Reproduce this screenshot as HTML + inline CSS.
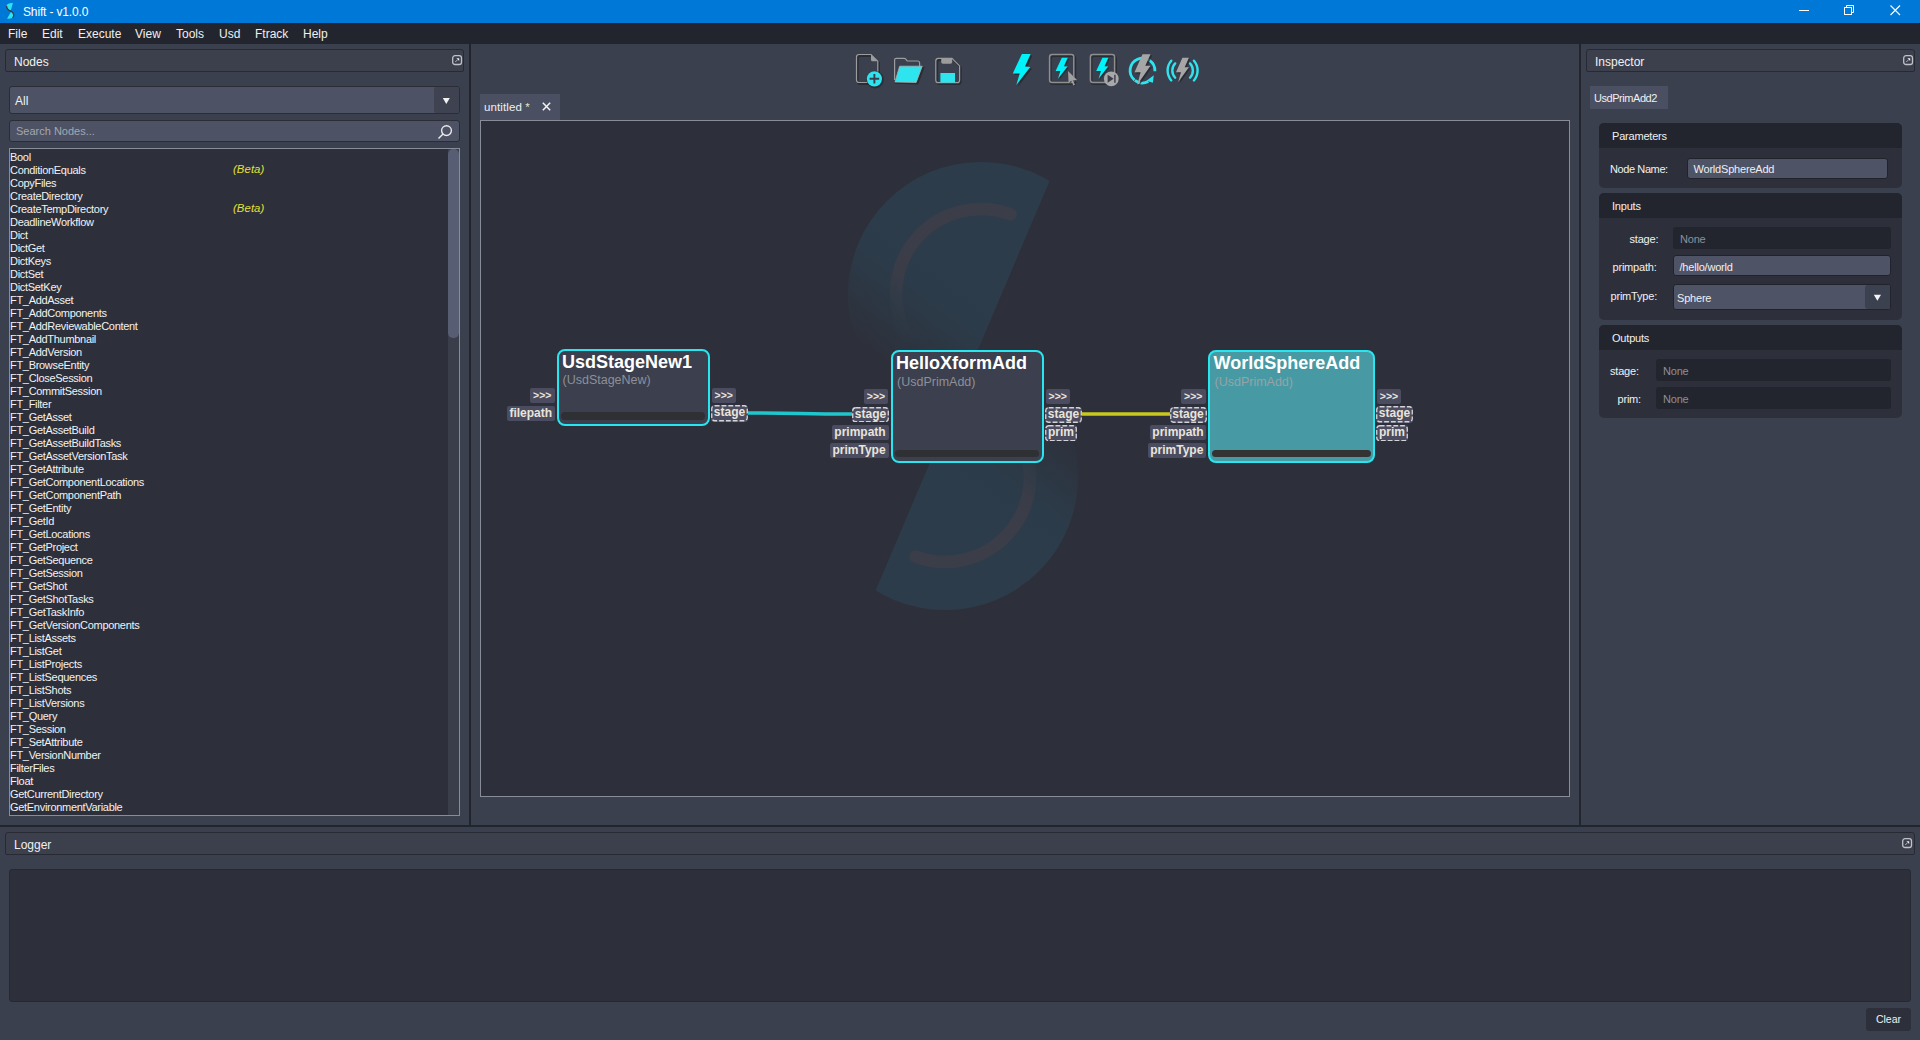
<!DOCTYPE html>
<html><head><meta charset="utf-8">
<style>
*{box-sizing:border-box;margin:0;padding:0}
html,body{width:1920px;height:1040px;overflow:hidden;background:#3b404e;font-family:"Liberation Sans",sans-serif;color:#e8e8e8}
.a{position:absolute}
#title{left:0;top:0;width:1920px;height:23px;background:#0078d7}
#menubar{left:0;top:23px;width:1920px;height:21px;background:#22252d}
.menu{position:absolute;top:27px;font-size:12px;color:#f0f0f0;line-height:14px}
.sepv{background:#22252d}
.hdr{border:1px solid #272a33;border-radius:3px 3px 2px 2px;background:#3c404d}
.hdr span{position:absolute;left:8px;top:5px;font-size:12px;color:#f0f0f0;line-height:14px}
.dockbtn{position:absolute;width:10px;height:10px;border:1px solid #b8bac0;border-radius:2px}
.field{background:#4d5265;border:1px solid #2a2d35;border-radius:3px}
#list{left:9px;top:148px;width:451px;height:668px;border:1px solid #888c98;background:#2d303b;overflow:hidden;padding-top:2px}
#list div{height:13px;line-height:13px;font-size:11px;letter-spacing:-0.3px;color:#f2f2f2;padding-left:0px;white-space:nowrap;position:relative}
#list i{position:absolute;left:223px;top:-1px;color:#e6e032;letter-spacing:0.1px;font-size:11.3px}

.node{position:absolute;border:2.4px solid #27e6f0;border-radius:8px;background:#3b3f4e}
.nt{position:absolute;font-weight:bold;font-size:18px;line-height:20px;color:#fff;white-space:nowrap}
.ns{position:absolute;font-size:12.5px;line-height:14px;color:#8d9099;white-space:nowrap}
.nb{position:absolute;height:7.5px;background:#2f3033;border-radius:4px}
.p{position:absolute;background:#4b4c60;border-radius:2px;font-weight:bold;font-size:12px;line-height:15px;color:#e9e5dc;text-align:center;white-space:nowrap}
.pa{font-size:10.5px;line-height:14px;letter-spacing:0px}
.pdx{border-radius:3px;line-height:15px}

.grp{position:absolute;left:1599px;width:303px;background:#2d303b;border-radius:5px;overflow:hidden}
.gh{position:absolute;left:0;top:0;width:100%;height:25px;background:#22252e}
.gh span{position:absolute;left:13px;top:7px;font-size:11px;line-height:13px;color:#f0f0f0;letter-spacing:-0.2px}
.lbl{position:absolute;font-size:11px;line-height:13px;color:#f0f0f0;white-space:nowrap;letter-spacing:-0.2px}
.inp{position:absolute;border-radius:3px;font-size:11px;line-height:13px;white-space:nowrap;letter-spacing:-0.2px}
.dk{background:#22252e;color:#8d9099}
.lt{background:#4e5366;color:#f0f0f0;border:1px solid #20232b}
</style></head><body>
<div id="title" class="a"></div>
<svg class="a" style="left:0;top:0" width="30" height="23" viewBox="0 0 30 23">
 <path d="M12.9,2.9 L10.9,10.3 C8.6,10 6.6,8.6 6.6,6.2 C6.6,4 9,2.9 12.9,2.9 Z" fill="#2ae6f0"/>
 <path d="M7,18.8 L11.2,11.6 C13,12.3 13.9,13.6 13.9,15.3 C13.9,17.6 11.8,18.8 7,18.8 Z" fill="#2ae6f0"/>
 <path d="M6.6,6 C6.6,8.6 8,9.8 10.2,10.8 C12.4,11.8 13.8,12.8 13.7,15.5 C13.6,16.5 13.2,17.3 12.6,17.8" stroke="#3d3a48" stroke-width="1.3" fill="none"/>
</svg>
<div class="a" style="left:23px;top:5px;font-size:12px;line-height:14px;color:#fff;letter-spacing:-0.15px">Shift - v1.0.0</div>
<svg class="a" style="left:1780px;top:0" width="140" height="23">
 <rect x="19" y="10" width="10" height="1" fill="#fff"/>
 <rect x="64.5" y="7.5" width="7" height="7" fill="none" stroke="#fff" stroke-width="1"/>
 <path d="M66.5 7.5 V5.5 H73.5 V12.5 H71.5" fill="none" stroke="#fff" stroke-width="1"/>
 <path d="M110.5 5.5 L120 15 M120 5.5 L110.5 15" stroke="#fff" stroke-width="1.1"/>
</svg>
<div id="menubar" class="a"></div>
<div class="menu" style="left:8px">File</div>
<div class="menu" style="left:42px">Edit</div>
<div class="menu" style="left:78px">Execute</div>
<div class="menu" style="left:135px">View</div>
<div class="menu" style="left:176px">Tools</div>
<div class="menu" style="left:219px">Usd</div>
<div class="menu" style="left:255px">Ftrack</div>
<div class="menu" style="left:303px">Help</div>

<!-- separators -->
<div class="a sepv" style="left:469px;top:44px;width:2px;height:783px"></div>
<div class="a sepv" style="left:1579px;top:44px;width:2px;height:783px"></div>
<div class="a sepv" style="left:0;top:825px;width:1920px;height:2px"></div>

<!-- Left dock -->
<div class="a hdr" style="left:5px;top:49px;width:459px;height:23px"><span>Nodes</span></div>
<svg class="a" style="left:451px;top:54px" width="12" height="12"><rect x="1.7" y="1.7" width="8.8" height="8.8" rx="2.3" fill="none" stroke="#bfc1c8" stroke-width="1.3"/><path d="M4.3 8 L6.6 5.7" stroke="#c8cad0" stroke-width="0.9"/><path d="M5.4 4.3 H8.2 V7.1 Z" fill="#eceef2"/></svg>
<div class="a field" style="left:9px;top:86px;width:451px;height:28px"></div>
<div class="a" style="left:434px;top:87px;width:25px;height:26px;background:#3f4351;border-radius:2px"></div>
<svg class="a" style="left:440px;top:96px" width="12" height="10"><path d="M2.8 2 H9.8 L6.3 8 Z" fill="#f2f2f2"/></svg>
<div class="a" style="left:15px;top:94px;font-size:12px;line-height:14px;color:#f2f2f2">All</div>
<div class="a field" style="left:9px;top:120px;width:451px;height:22px"></div>
<div class="a" style="left:16px;top:125px;font-size:11px;line-height:13px;color:#a4a7b0">Search Nodes...</div>
<svg class="a" style="left:436px;top:122px" width="20" height="20"><circle cx="10.5" cy="8.6" r="4.9" fill="none" stroke="#ececec" stroke-width="1.35"/><path d="M7 12 L2.5 16.5" stroke="#ececec" stroke-width="1.35"/></svg>
<div class="a" style="left:448px;top:149px;width:11px;height:666px;background:#3a3e4b;z-index:2"></div>
<div class="a" style="left:448px;top:149px;width:11px;height:189px;background:#575d72;border-radius:5px;z-index:3"></div>
<div id="list" class="a">
<div>Bool</div>
<div>ConditionEquals<i>(Beta)</i></div>
<div>CopyFiles</div>
<div>CreateDirectory</div>
<div>CreateTempDirectory<i>(Beta)</i></div>
<div>DeadlineWorkflow</div>
<div>Dict</div>
<div>DictGet</div>
<div>DictKeys</div>
<div>DictSet</div>
<div>DictSetKey</div>
<div>FT_AddAsset</div>
<div>FT_AddComponents</div>
<div>FT_AddReviewableContent</div>
<div>FT_AddThumbnail</div>
<div>FT_AddVersion</div>
<div>FT_BrowseEntity</div>
<div>FT_CloseSession</div>
<div>FT_CommitSession</div>
<div>FT_Filter</div>
<div>FT_GetAsset</div>
<div>FT_GetAssetBuild</div>
<div>FT_GetAssetBuildTasks</div>
<div>FT_GetAssetVersionTask</div>
<div>FT_GetAttribute</div>
<div>FT_GetComponentLocations</div>
<div>FT_GetComponentPath</div>
<div>FT_GetEntity</div>
<div>FT_GetId</div>
<div>FT_GetLocations</div>
<div>FT_GetProject</div>
<div>FT_GetSequence</div>
<div>FT_GetSession</div>
<div>FT_GetShot</div>
<div>FT_GetShotTasks</div>
<div>FT_GetTaskInfo</div>
<div>FT_GetVersionComponents</div>
<div>FT_ListAssets</div>
<div>FT_ListGet</div>
<div>FT_ListProjects</div>
<div>FT_ListSequences</div>
<div>FT_ListShots</div>
<div>FT_ListVersions</div>
<div>FT_Query</div>
<div>FT_Session</div>
<div>FT_SetAttribute</div>
<div>FT_VersionNumber</div>
<div>FilterFiles</div>
<div>Float</div>
<div>GetCurrentDirectory</div>
<div>GetEnvironmentVariable</div>
</div>

<!-- center -->
<svg class="a" style="left:0;top:0" width="1920" height="100" viewBox="0 0 1920 100">
<g opacity="0.7" transform="translate(1.2,1.4)" fill="none" stroke="#22252d" stroke-width="2">
 <path d="M859,54.5 H871 L877.8,61.3 V80 Q877.8,82.5 875.3,82.5 H859 Q856.5,82.5 856.5,80 V57 Q856.5,54.5 859,54.5 Z"/>
 <path d="M895,81.5 L899.4,66.5 H922 L916.3,82.2 Z" fill="#22252d"/>
 <path d="M938.5,58.5 H952 L959.5,66 V80 Q959.5,82.5 957,82.5 H938.5 Q936,82.5 936,80 V61 Q936,58.5 938.5,58.5 Z"/>
 <rect x="1049.5" y="54.5" width="24.5" height="28.2" rx="2.5"/>
 <rect x="1090.3" y="54.5" width="24.5" height="28.2" rx="2.5"/>
</g>
<!-- new file -->
<path d="M859,54.5 H871 L877.8,61.3 V80 Q877.8,82.5 875.3,82.5 H859 Q856.5,82.5 856.5,80 V57 Q856.5,54.5 859,54.5 Z" fill="none" stroke="#9c9c9c" stroke-width="1.2"/>
<path d="M871,54.5 L877.8,61.3 H872.5 Q871,61.3 871,59.8 Z" fill="#9c9c9c"/>
<circle cx="875.2" cy="79.6" r="8.8" fill="#22252d" opacity="0.6"/>
<circle cx="874.4" cy="78.8" r="7.6" fill="#2ee5ef"/>
<path d="M869.6,78.8 H879.2 M874.4,74 V83.6" stroke="#3b3f4c" stroke-width="1.9"/>
<!-- folder -->
<path d="M894.6,80 V60 Q894.6,58.3 896.3,58.3 H904 Q905.3,58.3 906,59.3 L907.2,61 H917.5 Q919.6,61 919.6,63 V66.5" fill="none" stroke="#9c9c9c" stroke-width="1.2"/>
<path d="M895,82 L899.6,66.2 H922.2 L916.2,82.4 Z" fill="#2ee5ef" stroke="#b0b0b0" stroke-width="0.8" stroke-linejoin="round"/>
<!-- save -->
<path d="M938.5,58.3 H952 L959.6,65.9 V80.2 Q959.6,82.7 957.1,82.7 H938.3 Q935.8,82.7 935.8,80.2 V60.8 Q935.8,58.3 938.3,58.3 Z" fill="none" stroke="#9c9c9c" stroke-width="1.2"/>
<path d="M941.2,58.3 H952.2 V62 Q952.2,63.8 950.4,63.8 H943 Q941.2,63.8 941.2,62 Z" fill="#9c9c9c"/>
<rect x="940.4" y="73" width="14.6" height="9.6" fill="#2ee5ef"/>
<!-- bolt -->
<path d="M1023.70,55.60 L1032.40,55.60 L1026.80,68.10 L1032.10,68.50 L1018.10,86.60 L1021.50,75.00 L1014.60,75.00 Z" fill="#23262e" opacity="0.75"/><path d="M1021.90,54.00 L1030.60,54.00 L1025.00,66.50 L1030.30,66.90 L1016.30,85.00 L1019.70,73.40 L1012.80,73.40 Z" fill="#00f2fa"/>
<!-- box bolt cursor -->
<rect x="1049.6" y="54.6" width="24.2" height="27.8" rx="2.5" fill="none" stroke="#8e8e8e" stroke-width="1.5"/>
<path d="M1063.03,59.00 L1068.99,59.00 L1065.16,67.46 L1068.79,67.73 L1059.20,79.99 L1061.53,72.13 L1056.80,72.13 Z" fill="#23262e" opacity="0.75"/><path d="M1061.83,57.80 L1067.79,57.80 L1063.96,66.26 L1067.59,66.53 L1058.00,78.79 L1060.33,70.93 L1055.60,70.93 Z" fill="#00f2fa"/>
<path d="M1068,71 L1068.6,83.3 L1071.2,80.8 L1073.4,85.6 L1075,84.8 L1072.8,80.2 L1077.3,80.3 Z" fill="#2a2d35" opacity="0.6" transform="translate(0.8,0.8)"/>
<path d="M1068,71 L1068.6,83.3 L1071.2,80.8 L1073.4,85.6 L1075,84.8 L1072.8,80.2 L1077.3,80.3 Z" fill="#a0a0a0"/>
<!-- box bolt play -->
<rect x="1090.4" y="54.6" width="24.2" height="27.8" rx="2.5" fill="none" stroke="#8e8e8e" stroke-width="1.5"/>
<path d="M1103.63,59.00 L1109.59,59.00 L1105.76,67.46 L1109.39,67.73 L1099.80,79.99 L1102.13,72.13 L1097.40,72.13 Z" fill="#23262e" opacity="0.75"/><path d="M1102.43,57.80 L1108.39,57.80 L1104.56,66.26 L1108.19,66.53 L1098.60,78.79 L1100.93,70.93 L1096.20,70.93 Z" fill="#00f2fa"/>
<circle cx="1111.3" cy="78.8" r="7.4" fill="#a8a8a8"/>
<path d="M1107.6,74.8 L1113.6,78.8 L1107.6,82.8 Z" fill="#3b3f4c"/>
<rect x="1114.2" y="74.8" width="1.4" height="8" fill="#3b3f4c"/>
<!-- refresh bolt -->
<path d="M1154.88,71.25 A12.4,12.4 0 1 0 1134.53,80.10" fill="none" stroke="#2ee5ef" stroke-width="2.8"/>
<path d="M1134.87,80.37 A12.4,12.4 0 0 0 1148.32,81.55" fill="none" stroke="#2ee5ef" stroke-width="2.8"/>
<path d="M1153.8,75.2 L1152.9,82.8 L1146.5,80.8 Z" fill="#2ee5ef"/>
<path d="M1144.10,55.60 L1152.10,55.60 L1146.90,67.10 L1152.10,67.10 L1138.90,86.10 L1142.20,73.70 L1136.10,73.70 Z" fill="#23262e" opacity="0.75"/><path d="M1142.50,54.20 L1150.50,54.20 L1145.30,65.70 L1150.50,65.70 L1137.30,84.70 L1140.60,72.30 L1134.50,72.30 Z" fill="#a6a6a6"/>
<!-- broadcast bolt -->
<path d="M1171.28,80.44 A15,15 0 0 1 1171.28,60.76" fill="none" stroke="#2ee5ef" stroke-width="2.4" stroke-linecap="round"/>
<path d="M1175.19,77.75 A10.3,10.3 0 0 1 1175.19,63.45" fill="none" stroke="#2ee5ef" stroke-width="2.4" stroke-linecap="round"/>
<path d="M1193.92,60.76 A15,15 0 0 1 1193.92,80.44" fill="none" stroke="#2ee5ef" stroke-width="2.4" stroke-linecap="round"/>
<path d="M1190.01,63.45 A10.3,10.3 0 0 1 1190.01,77.75" fill="none" stroke="#2ee5ef" stroke-width="2.4" stroke-linecap="round"/>
<path d="M1183.80,58.90 L1190.30,58.90 L1186.10,68.50 L1190.30,68.50 L1179.50,83.50 L1182.40,73.50 L1177.40,73.50 Z" fill="#23262e" opacity="0.75"/><path d="M1182.40,57.70 L1188.90,57.70 L1184.70,67.30 L1188.90,67.30 L1178.10,82.30 L1181.00,72.30 L1176.00,72.30 Z" fill="#a6a6a6"/>
</svg>
<div class="a" style="left:480px;top:94px;width:80px;height:26px;background:#4a4f62"></div>
<div class="a" style="left:484px;top:101px;font-size:11.5px;line-height:13px;color:#f0f0f0;letter-spacing:0.1px">untitled <span style="color:#e8e4c8">*</span></div>
<svg class="a" style="left:540px;top:100px" width="14" height="14"><path d="M2.8,2.8 L10.2,10.2 M10.2,2.8 L2.8,10.2" stroke="#f4f4f4" stroke-width="1.5"/></svg>
<div class="a" style="left:480px;top:120px;width:1090px;height:677px;border:1px solid #888c98;background:#2d303b"></div>
<svg class="a" style="left:0;top:0" width="1920" height="1040" viewBox="0 0 1920 1040">
<defs>
 <clipPath id="cu"><path d="M1101.7,58 L819.9,722 L600,722 L600,58 Z"/></clipPath>
 <clipPath id="cl"><path d="M1101.7,58 L819.9,722 L1300,722 L1300,58 Z"/></clipPath>
 <linearGradient id="gu" x1="981" y1="294" x2="897" y2="406" gradientUnits="userSpaceOnUse">
  <stop offset="0" stop-color="#2c3c4a"/><stop offset="0.25" stop-color="#2c3b49"/><stop offset="0.8" stop-color="#2d303b"/>
 </linearGradient>
 <linearGradient id="gl" x1="945" y1="477" x2="1029" y2="365" gradientUnits="userSpaceOnUse">
  <stop offset="0" stop-color="#2c3c4a"/><stop offset="0.25" stop-color="#2c3b49"/><stop offset="0.8" stop-color="#2d303b"/>
 </linearGradient>
 <linearGradient id="au" x1="981" y1="294" x2="897" y2="406" gradientUnits="userSpaceOnUse">
  <stop offset="0" stop-color="#3b3d49"/><stop offset="0.25" stop-color="#3a3c48"/><stop offset="0.62" stop-color="#2c3b49" stop-opacity="0"/>
 </linearGradient>
 <linearGradient id="al" x1="945" y1="477" x2="1029" y2="365" gradientUnits="userSpaceOnUse">
  <stop offset="0" stop-color="#3b3d49"/><stop offset="0.25" stop-color="#3a3c48"/><stop offset="0.62" stop-color="#2c3b49" stop-opacity="0"/>
 </linearGradient>
</defs>
<circle cx="981" cy="295" r="133" fill="url(#gu)" clip-path="url(#cu)"/>
<circle cx="945" cy="477" r="133" fill="url(#gl)" clip-path="url(#cl)"/>
<path d="M1010.5,214.3 A85,85 0 0 0 907.4,336.5" fill="none" stroke="url(#au)" stroke-width="12.5" stroke-linecap="round" clip-path="url(#cu)"/>
<path d="M915.5,556.7 A85,85 0 0 0 1018.6,434.5" fill="none" stroke="url(#al)" stroke-width="12.5" stroke-linecap="round" clip-path="url(#cl)"/>
<path d="M748,413 C800,413 800,414 852,414" fill="none" stroke="#1fc6ce" stroke-width="3.6"/>
<path d="M1082,414 L1170,414" fill="none" stroke="#c9c81e" stroke-width="3.6"/>
</svg>


<!-- nodes -->
<div class="node" style="left:557px;top:349px;width:152.5px;height:77px"></div>
<div class="nt" style="left:562px;top:352px">UsdStageNew1</div>
<div class="ns" style="left:562.5px;top:373px;letter-spacing:0px">(UsdStageNew)</div>
<div class="nb" style="left:561px;top:412px;width:144px"></div>
<div class="p pa" style="left:530px;top:388px;width:24.5px;height:14.5px">&gt;&gt;&gt;</div>
<div class="p" style="left:507px;top:406px;width:47.5px;height:14.5px">filepath</div>
<div class="p pa" style="left:711.5px;top:388px;width:24.5px;height:14.5px">&gt;&gt;&gt;</div>
<div class="p pdx" style="left:711.0px;top:405.0px;width:37.0px;height:16.5px">stage</div><svg class="a" style="left:711.0px;top:405.0px" width="37.0" height="16.5"><rect x="0.75" y="0.75" width="35.5" height="15.0" rx="3" fill="none" stroke="#d4d4d8" stroke-width="1.3" stroke-dasharray="4.8 2"/></svg>

<div class="node" style="left:890.5px;top:350px;width:153px;height:112.5px"></div>
<div class="nt" style="left:896px;top:353px">HelloXformAdd</div>
<div class="ns" style="left:897px;top:375px;letter-spacing:0px">(UsdPrimAdd)</div>
<div class="nb" style="left:895px;top:449.5px;width:144px"></div>
<div class="p pa" style="left:864px;top:389px;width:24px;height:14.5px">&gt;&gt;&gt;</div>
<div class="p pdx" style="left:852.0px;top:406.5px;width:37.0px;height:15.5px">stage</div><svg class="a" style="left:852.0px;top:406.5px" width="37.0" height="15.5"><rect x="0.75" y="0.75" width="35.5" height="14.0" rx="3" fill="none" stroke="#d4d4d8" stroke-width="1.3" stroke-dasharray="4.8 2"/></svg>
<div class="p" style="left:831.5px;top:425px;width:57px;height:14.5px">primpath</div>
<div class="p" style="left:829.5px;top:443px;width:59px;height:14.5px">primType</div>
<div class="p pa" style="left:1045.5px;top:389px;width:24.5px;height:14.5px">&gt;&gt;&gt;</div>
<div class="p pdx" style="left:1045.0px;top:406.5px;width:37.0px;height:16.0px">stage</div><svg class="a" style="left:1045.0px;top:406.5px" width="37.0" height="16.0"><rect x="0.75" y="0.75" width="35.5" height="14.5" rx="3" fill="none" stroke="#d4d4d8" stroke-width="1.3" stroke-dasharray="4.8 2"/></svg>
<div class="p pdx" style="left:1045.0px;top:424.5px;width:32.0px;height:16.5px">prim</div><svg class="a" style="left:1045.0px;top:424.5px" width="32.0" height="16.5"><rect x="0.75" y="0.75" width="30.5" height="15.0" rx="3" fill="none" stroke="#d4d4d8" stroke-width="1.3" stroke-dasharray="4.8 2"/></svg>

<div class="node" style="left:1208px;top:350px;width:167px;height:113px;background:#479aa3"></div>
<div class="nt" style="left:1213.5px;top:353px">WorldSphereAdd</div>
<div class="ns" style="left:1214.5px;top:375px;color:#96a3a8;letter-spacing:0px">(UsdPrimAdd)</div>
<div class="nb" style="left:1212px;top:449.8px;width:159px;background:#333"></div>
<div class="p pa" style="left:1181px;top:389px;width:24.5px;height:14.5px">&gt;&gt;&gt;</div>
<div class="p pdx" style="left:1169.5px;top:406.5px;width:37.0px;height:16.0px">stage</div><svg class="a" style="left:1169.5px;top:406.5px" width="37.0" height="16.0"><rect x="0.75" y="0.75" width="35.5" height="14.5" rx="3" fill="none" stroke="#d4d4d8" stroke-width="1.3" stroke-dasharray="4.8 2"/></svg>
<div class="p" style="left:1150px;top:425px;width:56px;height:14.5px">primpath</div>
<div class="p" style="left:1147.5px;top:443px;width:58.5px;height:14.5px">primType</div>
<div class="p pa" style="left:1377px;top:389px;width:24px;height:15px">&gt;&gt;&gt;</div>
<div class="p pdx" style="left:1376.0px;top:406.0px;width:37.0px;height:16.5px">stage</div><svg class="a" style="left:1376.0px;top:406.0px" width="37.0" height="16.5"><rect x="0.75" y="0.75" width="35.5" height="15.0" rx="3" fill="none" stroke="#d4d4d8" stroke-width="1.3" stroke-dasharray="4.8 2"/></svg>
<div class="p pdx" style="left:1376.0px;top:424.5px;width:32.0px;height:16.5px">prim</div><svg class="a" style="left:1376.0px;top:424.5px" width="32.0" height="16.5"><rect x="0.75" y="0.75" width="30.5" height="15.0" rx="3" fill="none" stroke="#d4d4d8" stroke-width="1.3" stroke-dasharray="4.8 2"/></svg>

<!-- right -->
<div class="a hdr" style="left:1586px;top:49px;width:329px;height:23px"><span>Inspector</span></div>
<svg class="a" style="left:1902px;top:54px" width="12" height="12"><rect x="1.7" y="1.7" width="8.8" height="8.8" rx="2.3" fill="none" stroke="#bfc1c8" stroke-width="1.3"/><path d="M4.3 8 L6.6 5.7" stroke="#c8cad0" stroke-width="0.9"/><path d="M5.4 4.3 H8.2 V7.1 Z" fill="#eceef2"/></svg>


<div class="a" style="left:1590px;top:86px;width:78px;height:23px;background:#4a4f62"></div>
<div class="lbl" style="left:1594px;top:92px;letter-spacing:-0.45px">UsdPrimAdd2</div>
<div class="grp" style="top:123px;height:64.5px"><div class="gh"><span>Parameters</span></div></div>
<div class="lbl" style="left:1610px;top:163px;letter-spacing:-0.4px">Node Name:</div>
<div class="inp lt" style="left:1687px;top:157.5px;width:200.5px;height:21px"><span style="position:absolute;left:5.5px;top:4px;letter-spacing:-0.2px">WorldSphereAdd</span></div>

<div class="grp" style="top:193px;height:126.5px"><div class="gh"><span>Inputs</span></div></div>
<div class="lbl" style="left:1629.5px;top:233px">stage:</div>
<div class="inp dk" style="left:1673px;top:227px;width:218px;height:21.5px"><span style="position:absolute;left:7px;top:6px">None</span></div>
<div class="lbl" style="left:1612.5px;top:261px">primpath:</div>
<div class="inp lt" style="left:1673px;top:255px;width:217.5px;height:21px"><span style="position:absolute;left:5.5px;top:5px">/hello/world</span></div>
<div class="lbl" style="left:1610.5px;top:290px">primType:</div>
<div class="inp lt" style="left:1673px;top:283.5px;width:217.5px;height:26.5px"><span style="position:absolute;left:3px;top:7px">Sphere</span></div>
<div class="a" style="left:1865px;top:285px;width:24.5px;height:24px;background:#3c4150;border-radius:3px"></div>
<svg class="a" style="left:1871px;top:293px" width="12" height="10"><path d="M2.8 1.8 H10 L6.4 7.8 Z" fill="#f4f4f4"/></svg>

<div class="grp" style="top:325px;height:92.5px"><div class="gh"><span>Outputs</span></div></div>
<div class="lbl" style="left:1610px;top:365px">stage:</div>
<div class="inp dk" style="left:1656px;top:359px;width:235px;height:22px"><span style="position:absolute;left:7px;top:6px">None</span></div>
<div class="lbl" style="left:1617.5px;top:393px">prim:</div>
<div class="inp dk" style="left:1656px;top:387px;width:235px;height:22px"><span style="position:absolute;left:7px;top:6px">None</span></div>

<!-- logger -->
<div class="a hdr" style="left:5px;top:832px;width:1910px;height:23px"><span>Logger</span></div>
<svg class="a" style="left:1901px;top:837px" width="12" height="12"><rect x="1.7" y="1.7" width="8.8" height="8.8" rx="2.3" fill="none" stroke="#bfc1c8" stroke-width="1.3"/><path d="M4.3 8 L6.6 5.7" stroke="#c8cad0" stroke-width="0.9"/><path d="M5.4 4.3 H8.2 V7.1 Z" fill="#eceef2"/></svg>
<div class="a" style="left:9px;top:869px;width:1902px;height:133px;background:#2d303b;border:1px solid #262932;border-radius:3px"></div>
<div class="a" style="left:1866px;top:1008px;width:45px;height:23px;background:#2d303b;border-radius:3px;font-size:10.5px;line-height:23px;text-align:center;color:#f0f0f0">Clear</div>
</body></html>
